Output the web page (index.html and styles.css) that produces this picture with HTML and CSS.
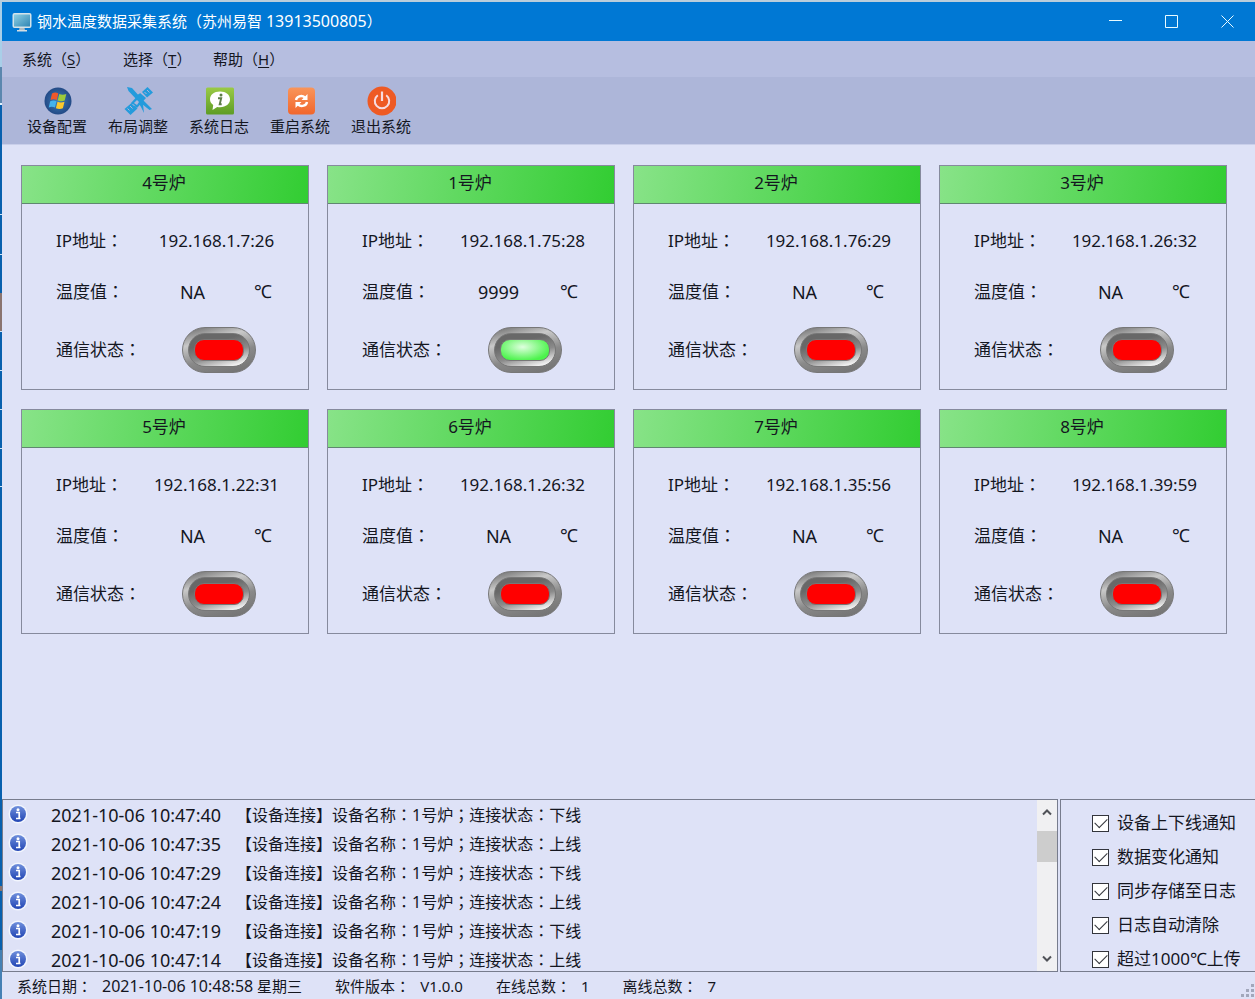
FILE: index.html
```html
<!DOCTYPE html>
<html lang="zh-CN">
<head>
<meta charset="utf-8">
<title>钢水温度数据采集系统</title>
<link rel="stylesheet" href="styles.css">
</head>
<body>
<div class="window">
  <header class="titlebar">
    <svg class="app-icon" viewBox="0 0 20 20" aria-hidden="true">
      <defs><linearGradient id="scr" x1="0" y1="0" x2="1" y2="1"><stop offset="0" stop-color="#8fd0e4"/><stop offset="1" stop-color="#2f86b4"/></linearGradient></defs>
      <rect x="0.5" y="1" width="19" height="15" rx="2" fill="#d3e3ea"/>
      <rect x="2" y="2.500" width="16" height="12" rx="0.500" fill="url(#scr)"/>
      <path d="M7.500 16h5l.5 2h-6z" fill="#aebbc2"/><path d="M5 18h10v1.500H5z" fill="#d5dde2"/>
    </svg>
    <h1 class="title">钢水温度数据采集系统<i lang="zh-TW">（</i>苏州易智 <span class="num">13913500805</span><i lang="zh-TW">）</i></h1>
    <div class="controls">
      <button class="control" aria-label="最小化"><svg viewBox="0 0 13 13"><path d="M0 5.500h13"/></svg></button>
      <button class="control" aria-label="最大化"><svg viewBox="0 0 13 13"><path d="M.5.500h12v12H.5z"/></svg></button>
      <button class="control" aria-label="关闭"><svg viewBox="0 0 13 13"><path d="M.5.5l12 12M12.500.5l-12 12"/></svg></button>
    </div>
  </header>
  <nav class="menu">
    <button class="menu-item">系统<i lang="zh-TW">（</i><u>S</u><i lang="zh-TW">）</i></button>
    <button class="menu-item">选择<i lang="zh-TW">（</i><u>T</u><i lang="zh-TW">）</i></button>
    <button class="menu-item">帮助<i lang="zh-TW">（</i><u>H</u><i lang="zh-TW">）</i></button>
  </nav>
  <div class="toolbar">
    <button class="tool">
      <svg viewBox="0 0 30 30"><defs><radialGradient id="orb"><stop offset="0" stop-color="#3d7fb8"/><stop offset="1" stop-color="#234a86"/></radialGradient></defs>
        <circle cx="16" cy="15" r="13.500" fill="url(#orb)"/>
        <path d="M10 7.500q3.300-1.800 6.300 0l-1.500 6.500q-3.300-1.600-6.300 0z" fill="#f0582a"/>
        <path d="M17.300 8q3.300 1.600 7 0l-1.600 6.500q-3.300 1.600-7 0z" fill="#9ccb3b"/>
        <path d="M8.200 15.300q3.300-1.700 6.300 0l-1.500 6.200q-3.300-1.600-6.300 0z" fill="#45b3ec"/>
        <path d="M15.500 15.800q3.300 1.600 7 0l-1.600 6.400q-3.300 1.600-7 0z" fill="#fcc92c"/>
      </svg>设备配置</button>
    <button class="tool">
      <svg viewBox="0 0 30 30" fill="#249bdc">
        <path d="M24.500 1l5.500 5.500-6 5-5-5.500z"/><path d="M8.500 17l6 5.500-7 6.500-6-6z"/>
        <path d="M17 7l6 5-9 10-6-5z"/>
        <path d="M4 1l5 1 8 9 12 12-2.500 1L14 14 5.500 5z"/>
        <path d="M15 8l3 2 2 8 1 9-3-6-5-8z"/>
        <path d="M4.500 22.500l2 2M7 20l2.500 2.500M9.500 18l2 2M21.500 6l2 2M24 4l2.500 2.500" stroke="#adb6d9" stroke-width="1"/>
        <path d="M11 17l3 2 2-3-2-2z" fill="#adb6d9"/>
      </svg>布局调整</button>
    <button class="tool">
      <svg viewBox="0 0 30 30"><defs><linearGradient id="grn" x1="0" y1="0" x2="0" y2="1"><stop offset="0" stop-color="#9aca45"/><stop offset="1" stop-color="#5d9c25"/></linearGradient></defs>
        <rect x="2" y="1.500" width="28" height="27" rx="1.500" fill="url(#grn)"/>
        <path d="M16 5.500c6 0 10 3.200 10 7.800s-4 7.900-10 7.900q-1.600 0-2.800-.3L8.500 24l.7-5C7.100 17.600 6 15.600 6 13.300c0-4.600 4-7.800 10-7.800z" fill="#fff"/>
        <circle cx="17" cy="9" r="1.500" fill="#5d7d48"/><path d="M14 12.200h3.200l-1.500 6h2" fill="none" stroke="#5d7d48" stroke-width="1.900"/>
      </svg>系统日志</button>
    <button class="tool">
      <svg viewBox="0 0 30 30"><defs><linearGradient id="org" x1="0" y1="0" x2="0" y2="1"><stop offset="0" stop-color="#f9955a"/><stop offset="1" stop-color="#f1662c"/></linearGradient></defs>
        <rect x="3" y="1.500" width="27" height="27" rx="4" fill="url(#org)"/>
        <path d="M11 14c.5-3.500 5.500-5.500 9-2.500M22 16c-.5 3.500-5.500 5.500-9 2.500" fill="none" stroke="#fff" stroke-width="2.400"/>
        <path d="M22.500 8v6h-6zM10.500 22v-6h6z" fill="#fff"/>
      </svg>重启系统</button>
    <button class="tool">
      <svg viewBox="0 0 30 30"><circle cx="16" cy="15" r="14.500" fill="#ee5a24"/>
        <path d="M11.800 9.300a7.200 7.200 0 1 0 8.400 0" fill="none" stroke="#f7dce0" stroke-width="2"/><path d="M16 5.500v9.500" stroke="#f7dce0" stroke-width="2.200"/>
      </svg>退出系统</button>
  </div>

  <main class="devices">
    <section class="card"><h2 class="card-title">4号炉</h2>
      <div class="row"><span class="label">IP地址<i lang="zh-TW">：</i></span><span class="value">192.168.1.7:26</span></div>
      <div class="row"><span class="label">温度值<i lang="zh-TW">：</i></span><span class="value temp">NA</span><span class="unit">℃</span></div>
      <div class="row row-state"><span class="label">通信状态<i lang="zh-TW">：</i></span><span class="value"><span class="led"><span class="led-ring"><span class="led-lamp"></span></span></span></span></div></section>
    <section class="card"><h2 class="card-title">1号炉</h2>
      <div class="row"><span class="label">IP地址<i lang="zh-TW">：</i></span><span class="value">192.168.1.75:28</span></div>
      <div class="row"><span class="label">温度值<i lang="zh-TW">：</i></span><span class="value temp">9999</span><span class="unit">℃</span></div>
      <div class="row row-state"><span class="label">通信状态<i lang="zh-TW">：</i></span><span class="value"><span class="led"><span class="led-ring"><span class="led-lamp online"></span></span></span></span></div></section>
    <section class="card"><h2 class="card-title">2号炉</h2>
      <div class="row"><span class="label">IP地址<i lang="zh-TW">：</i></span><span class="value">192.168.1.76:29</span></div>
      <div class="row"><span class="label">温度值<i lang="zh-TW">：</i></span><span class="value temp">NA</span><span class="unit">℃</span></div>
      <div class="row row-state"><span class="label">通信状态<i lang="zh-TW">：</i></span><span class="value"><span class="led"><span class="led-ring"><span class="led-lamp"></span></span></span></span></div></section>
    <section class="card"><h2 class="card-title">3号炉</h2>
      <div class="row"><span class="label">IP地址<i lang="zh-TW">：</i></span><span class="value">192.168.1.26:32</span></div>
      <div class="row"><span class="label">温度值<i lang="zh-TW">：</i></span><span class="value temp">NA</span><span class="unit">℃</span></div>
      <div class="row row-state"><span class="label">通信状态<i lang="zh-TW">：</i></span><span class="value"><span class="led"><span class="led-ring"><span class="led-lamp"></span></span></span></span></div></section>
    <section class="card"><h2 class="card-title">5号炉</h2>
      <div class="row"><span class="label">IP地址<i lang="zh-TW">：</i></span><span class="value">192.168.1.22:31</span></div>
      <div class="row"><span class="label">温度值<i lang="zh-TW">：</i></span><span class="value temp">NA</span><span class="unit">℃</span></div>
      <div class="row row-state"><span class="label">通信状态<i lang="zh-TW">：</i></span><span class="value"><span class="led"><span class="led-ring"><span class="led-lamp"></span></span></span></span></div></section>
    <section class="card"><h2 class="card-title">6号炉</h2>
      <div class="row"><span class="label">IP地址<i lang="zh-TW">：</i></span><span class="value">192.168.1.26:32</span></div>
      <div class="row"><span class="label">温度值<i lang="zh-TW">：</i></span><span class="value temp">NA</span><span class="unit">℃</span></div>
      <div class="row row-state"><span class="label">通信状态<i lang="zh-TW">：</i></span><span class="value"><span class="led"><span class="led-ring"><span class="led-lamp"></span></span></span></span></div></section>
    <section class="card"><h2 class="card-title">7号炉</h2>
      <div class="row"><span class="label">IP地址<i lang="zh-TW">：</i></span><span class="value">192.168.1.35:56</span></div>
      <div class="row"><span class="label">温度值<i lang="zh-TW">：</i></span><span class="value temp">NA</span><span class="unit">℃</span></div>
      <div class="row row-state"><span class="label">通信状态<i lang="zh-TW">：</i></span><span class="value"><span class="led"><span class="led-ring"><span class="led-lamp"></span></span></span></span></div></section>
    <section class="card"><h2 class="card-title">8号炉</h2>
      <div class="row"><span class="label">IP地址<i lang="zh-TW">：</i></span><span class="value">192.168.1.39:59</span></div>
      <div class="row"><span class="label">温度值<i lang="zh-TW">：</i></span><span class="value temp">NA</span><span class="unit">℃</span></div>
      <div class="row row-state"><span class="label">通信状态<i lang="zh-TW">：</i></span><span class="value"><span class="led"><span class="led-ring"><span class="led-lamp"></span></span></span></span></div></section>
  </main>

  <svg class="symbols" aria-hidden="true"><defs>
    <linearGradient id="blu" x1="0" y1="0" x2="0" y2="1"><stop offset="0" stop-color="#6f8fdc"/><stop offset="1" stop-color="#2145b4"/></linearGradient>
    <symbol id="info" viewBox="0 0 20 20"><circle cx="10" cy="10" r="9.500" fill="#f3f6fd"/><circle cx="10" cy="10" r="8" fill="url(#blu)"/><circle cx="10" cy="5.700" r="1.500" fill="#fff"/><path d="M8 8.500h3.200v6M8 14.500h4.500" fill="none" stroke="#fff" stroke-width="1.700"/></symbol>
  </defs></svg>

  <div class="bottom">
    <section class="log">
      <ul class="log-list">
        <li class="log-row"><svg class="info"><use href="#info"/></svg><time>2021-10-06 10:47:40</time><span class="message">【设备连接】设备名称<i lang="zh-TW">：</i>1号炉<i lang="zh-TW">；</i>连接状态<i lang="zh-TW">：</i>下线</span></li>
        <li class="log-row"><svg class="info"><use href="#info"/></svg><time>2021-10-06 10:47:35</time><span class="message">【设备连接】设备名称<i lang="zh-TW">：</i>1号炉<i lang="zh-TW">；</i>连接状态<i lang="zh-TW">：</i>上线</span></li>
        <li class="log-row"><svg class="info"><use href="#info"/></svg><time>2021-10-06 10:47:29</time><span class="message">【设备连接】设备名称<i lang="zh-TW">：</i>1号炉<i lang="zh-TW">；</i>连接状态<i lang="zh-TW">：</i>下线</span></li>
        <li class="log-row"><svg class="info"><use href="#info"/></svg><time>2021-10-06 10:47:24</time><span class="message">【设备连接】设备名称<i lang="zh-TW">：</i>1号炉<i lang="zh-TW">；</i>连接状态<i lang="zh-TW">：</i>上线</span></li>
        <li class="log-row"><svg class="info"><use href="#info"/></svg><time>2021-10-06 10:47:19</time><span class="message">【设备连接】设备名称<i lang="zh-TW">：</i>1号炉<i lang="zh-TW">；</i>连接状态<i lang="zh-TW">：</i>下线</span></li>
        <li class="log-row"><svg class="info"><use href="#info"/></svg><time>2021-10-06 10:47:14</time><span class="message">【设备连接】设备名称<i lang="zh-TW">：</i>1号炉<i lang="zh-TW">；</i>连接状态<i lang="zh-TW">：</i>上线</span></li>
      </ul>
      <div class="scrollbar">
        <button class="arrow" aria-label="向上滚动"><svg viewBox="0 0 10 8"><path d="M1 6.500l4-4 4 4"/></svg></button>
        <div class="track"><div class="thumb"></div></div>
        <button class="arrow" aria-label="向下滚动"><svg viewBox="0 0 10 8"><path d="M1 1.500l4 4 4-4"/></svg></button>
      </div>
    </section>
    <section class="options">
      <label class="option"><input type="checkbox" checked>设备上下线通知</label>
      <label class="option"><input type="checkbox" checked>数据变化通知</label>
      <label class="option"><input type="checkbox" checked>同步存储至日志</label>
      <label class="option"><input type="checkbox" checked>日志自动清除</label>
      <label class="option"><input type="checkbox" checked>超过1000℃上传</label>
    </section>
  </div>

  <footer class="status">
    <span class="status-item"><span>系统日期<i lang="zh-TW">：</i></span><span><span class="num">2021-10-06 10:48:58</span> 星期三</span></span>
    <span class="status-item"><span>软件版本<i lang="zh-TW">：</i></span><span>V1.0.0</span></span>
    <span class="status-item"><span>在线总数<i lang="zh-TW">：</i></span><span>1</span></span>
    <span class="status-item"><span>离线总数<i lang="zh-TW">：</i></span><span>7</span></span>
    <svg class="grip" viewBox="0 0 14 14" fill="#a2a7bb" aria-hidden="true"><path d="M10 0h3v3h-3zM5 5h3v3H5zM10 5h3v3h-3zM0 10h3v3H0zM5 10h3v3H5zM10 10h3v3h-3z"/></svg>
  </footer>
</div>
</body>
</html>
```
FILE: styles.css
```css
* { box-sizing: border-box; }
body {
  margin: 0;
  color: #14161f;
  font-family: "Noto Sans", "Noto Sans CJK SC", sans-serif;
  font-size: 15px;
  line-height: 20px;
  text-spacing-trim: space-all;
}
button {
  margin: 0;
  padding: 0;
  border: 0;
  background: none;
  color: inherit;
  font: inherit;
  white-space: nowrap;
}
h1, h2 { margin: 0; font-weight: 400; }
i { font-family: "Noto Sans CJK TC", sans-serif; font-style: normal; }
.window {
  display: flex;
  flex-direction: column;
  min-height: 100vh;
  padding-left: 2px;
  border-top: 2px solid #b9cddb;
  background:
    linear-gradient(#a9cfe8 65px, #5b87ae 65px 101px, #e4f4ff 101px 103px, #0860ae 103px 212px, #cfe6f8 212px 213px, #0860ae 213px 252px, #cfe6f8 252px 253px, #0860ae 253px 291px, #8a7470 291px 329px, #cfe6f8 329px 330px, #0860ae 330px 368px, #cfe6f8 368px 369px, #0860ae 369px 407px, #cfe6f8 407px 408px, #0860ae 408px 446px, #cfe6f8 446px 447px, #0860ae 447px 484px, #cfe6f8 484px 485px, #0860ae 485px 884px, #8a7470 884px 889px, #0860ae 889px 948px, #4580b4 948px) left / 2px 100% no-repeat,
    #dee2f7;
}

.titlebar { display: flex; align-items: center; height: 39px; padding-left: 10px; background: #0078d4; color: #fff; }
.app-icon { width: 20px; height: 20px; margin-right: 5px; }
.title { font-size: 15px; line-height: 20px; margin-bottom: 2px; white-space: nowrap; }
.num { font-size: 16px; }
.controls { display: flex; height: 100%; margin-left: auto; }
.control { display: grid; place-items: center; width: 56px; }
.control svg { width: 13px; height: 13px; fill: none; stroke: #e9fbff; stroke-width: 1; }

.menu { display: grid; grid-template-columns: 101px 90px auto; justify-content: start; height: 36px; padding-left: 20px; background: #b6bee0; }
.menu-item { text-align: left; }
.menu-item u { text-underline-offset: 2px; }
.toolbar { display: flex; gap: 21px; align-items: start; height: 68px; padding: 9px 25px 0; background: #adb6d9; border-bottom: 1px solid #c9cfea; }
.tool { display: flex; flex-direction: column; align-items: center; }
.tool svg { width: 30px; height: 30px; }

.devices { flex: 1; display: grid; grid-template-columns: repeat(4, 1fr); align-content: start; gap: 19px 18px; padding: 20px 28px 20px 19px; }
.card { display: flex; flex-direction: column; height: 225px; border: 1px solid #868a9d; font-size: 17px; white-space: nowrap; }
.card-title { height: 38px; padding-right: 2px; border-bottom: 1px solid #5f8770; background: linear-gradient(100deg, #88e388, #32cd32); font-size: 17px; line-height: 34px; text-align: center; }
.row { display: flex; align-items: center; height: 51px; padding: 0 16px 0 34px; }
.card-title + .row { margin-top: 11px; }
.row-state { height: 65px; padding-right: 12px; }
.label { width: 85px; }
.value { flex: 1; display: flex; justify-content: center; }
.temp { font-size: 18px; }
.unit { width: 48px; padding: 0 10px 2px 0; font-size: 18px; text-align: center; }

.led { display: grid; place-items: center; width: 74px; height: 46px; border: 1px solid #777; border-radius: 23px; background: linear-gradient(165deg, #777 5%, #c9c9c9 30%, #898989 60%, #707070); }
.led-ring { display: grid; place-items: center; width: 62px; height: 34px; border: 1px solid #777; border-radius: 17px; background: linear-gradient(165deg, #686868 30%, #8b8b8b 60%, #f0f0f0 90%); }
.led-lamp { width: 50px; height: 22px; border: 1px solid #777; border-radius: 10px; background: #f00; }
.led-lamp.online { background: radial-gradient(ellipse at 45% 35%, #dfffdf, #4cf34c 75%); }

.symbols { display: block; width: 0; height: 0; }
.bottom { display: flex; gap: 2px; height: 173px; }
.log { flex: 1; display: flex; border: 1px solid #777c8d; }
.log-list { flex: 1; display: grid; grid-template-rows: repeat(6, 29px); height: 171px; margin: 0; padding: 0; list-style: none; }
.log-row { display: grid; grid-template-columns: 48px 185px 1fr; align-items: center; }
.info { width: 20px; height: 20px; margin: 0 0 2px 5px; }
.log-row time { font-size: 18px; white-space: nowrap; }
.message { font-size: 16px; white-space: nowrap; }
.scrollbar { display: flex; flex-direction: column; width: 20px; background: #f0f0f2; }
.arrow { display: grid; place-items: center; height: 24px; }
.arrow svg { width: 10px; height: 8px; fill: none; stroke: #505258; stroke-width: 2; }
.track { flex: 1; padding-top: 7px; }
.thumb { height: 31px; background: #cdcdcd; }

.options { display: grid; align-content: start; gap: 14px; width: 195px; padding: 13px 0 0 31px; border: solid #777c8d; border-width: 1px 0 1px 1px; }
.option { display: flex; gap: 8px; align-items: center; height: 20px; font-size: 17px; white-space: nowrap; }
.option input {
  appearance: none;
  flex: none;
  width: 17px;
  height: 17px;
  margin: 0;
  border: 1px solid #33353c;
  background: #fff;
  display: grid;
  place-items: center;
}
.option input:checked::before { content: ""; width: 11px; height: 6px; border: solid #33353c; border-width: 0 0 1px 1px; transform: translateY(-2px) rotate(-45deg); }

.status { position: relative; display: flex; align-items: center; height: 27px; padding-left: 15px; white-space: nowrap; }
.status-item { display: flex; gap: 10px; align-items: center; margin-right: 33px; }
.grip { position: absolute; right: 0; bottom: 1px; width: 14px; height: 14px; }
```
